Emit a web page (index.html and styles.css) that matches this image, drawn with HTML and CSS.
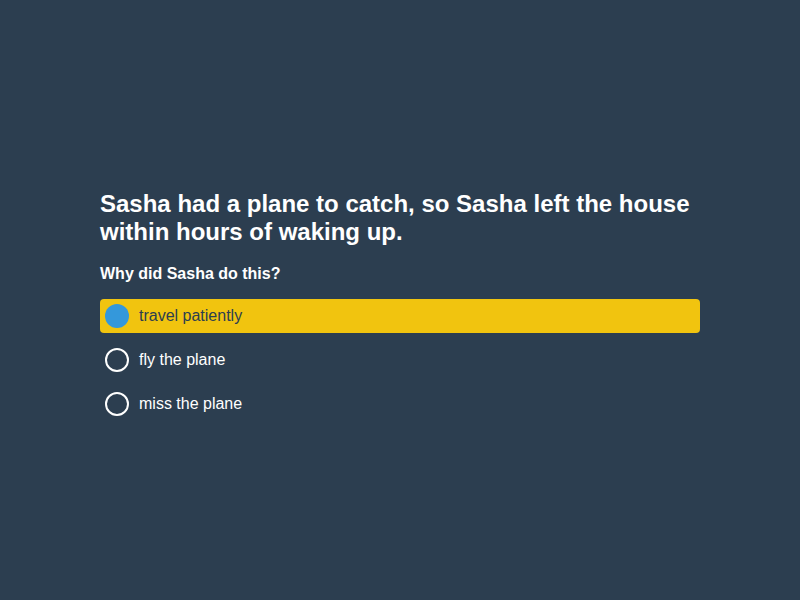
FILE: index.html
```html
<!DOCTYPE html>
<html>
<head>
<meta charset="utf-8">
<link rel="stylesheet" href="styles.css">
</head>
<body>
<main class="page">
  <section class="quiz">
    <h1 class="story">Sasha had a plane to catch, so Sasha left the house within hours of waking up.</h1>
    <h2 class="question">Why did Sasha do this?</h2>
    <ul class="options">
      <li class="option selected"><span class="radio"></span><span class="label">travel patiently</span></li>
      <li class="option"><span class="radio"></span><span class="label">fly the plane</span></li>
      <li class="option"><span class="radio"></span><span class="label">miss the plane</span></li>
    </ul>
  </section>
</main>
</body>
</html>
```

FILE: styles.css
```css
html, body {
  margin: 0;
  padding: 0;
  background: #2c3e50;
  font-family: "Liberation Sans", Arial, sans-serif;
  color: #ffffff;
}
.page {
  box-sizing: border-box;
  height: 600px;
  padding-top: 11px;
  display: flex;
  align-items: center;
  justify-content: center;
}
.quiz {
  width: 600px;
}
.story {
  margin: 0 0 19px 0;
  font-size: 24px;
  line-height: normal;
  font-weight: bold;
}
.question {
  margin: 0 0 16px 0;
  font-size: 16px;
  line-height: normal;
  font-weight: bold;
}
.options {
  list-style: none;
  margin: 0;
  padding: 0;
  display: flex;
  flex-direction: column;
  gap: 10px;
}
.option {
  height: 34px;
  display: flex;
  align-items: center;
  padding-left: 5px;
  border-radius: 4px;
  font-size: 16px;
}
.option.selected {
  background: #f1c40f;
  color: #2c3e50;
}
.radio {
  box-sizing: border-box;
  width: 24px;
  height: 24px;
  border-radius: 50%;
  border: 2px solid #ffffff;
  margin-right: 10px;
  flex: none;
}
.selected .radio {
  border: none;
  background: #3498db;
}
```
